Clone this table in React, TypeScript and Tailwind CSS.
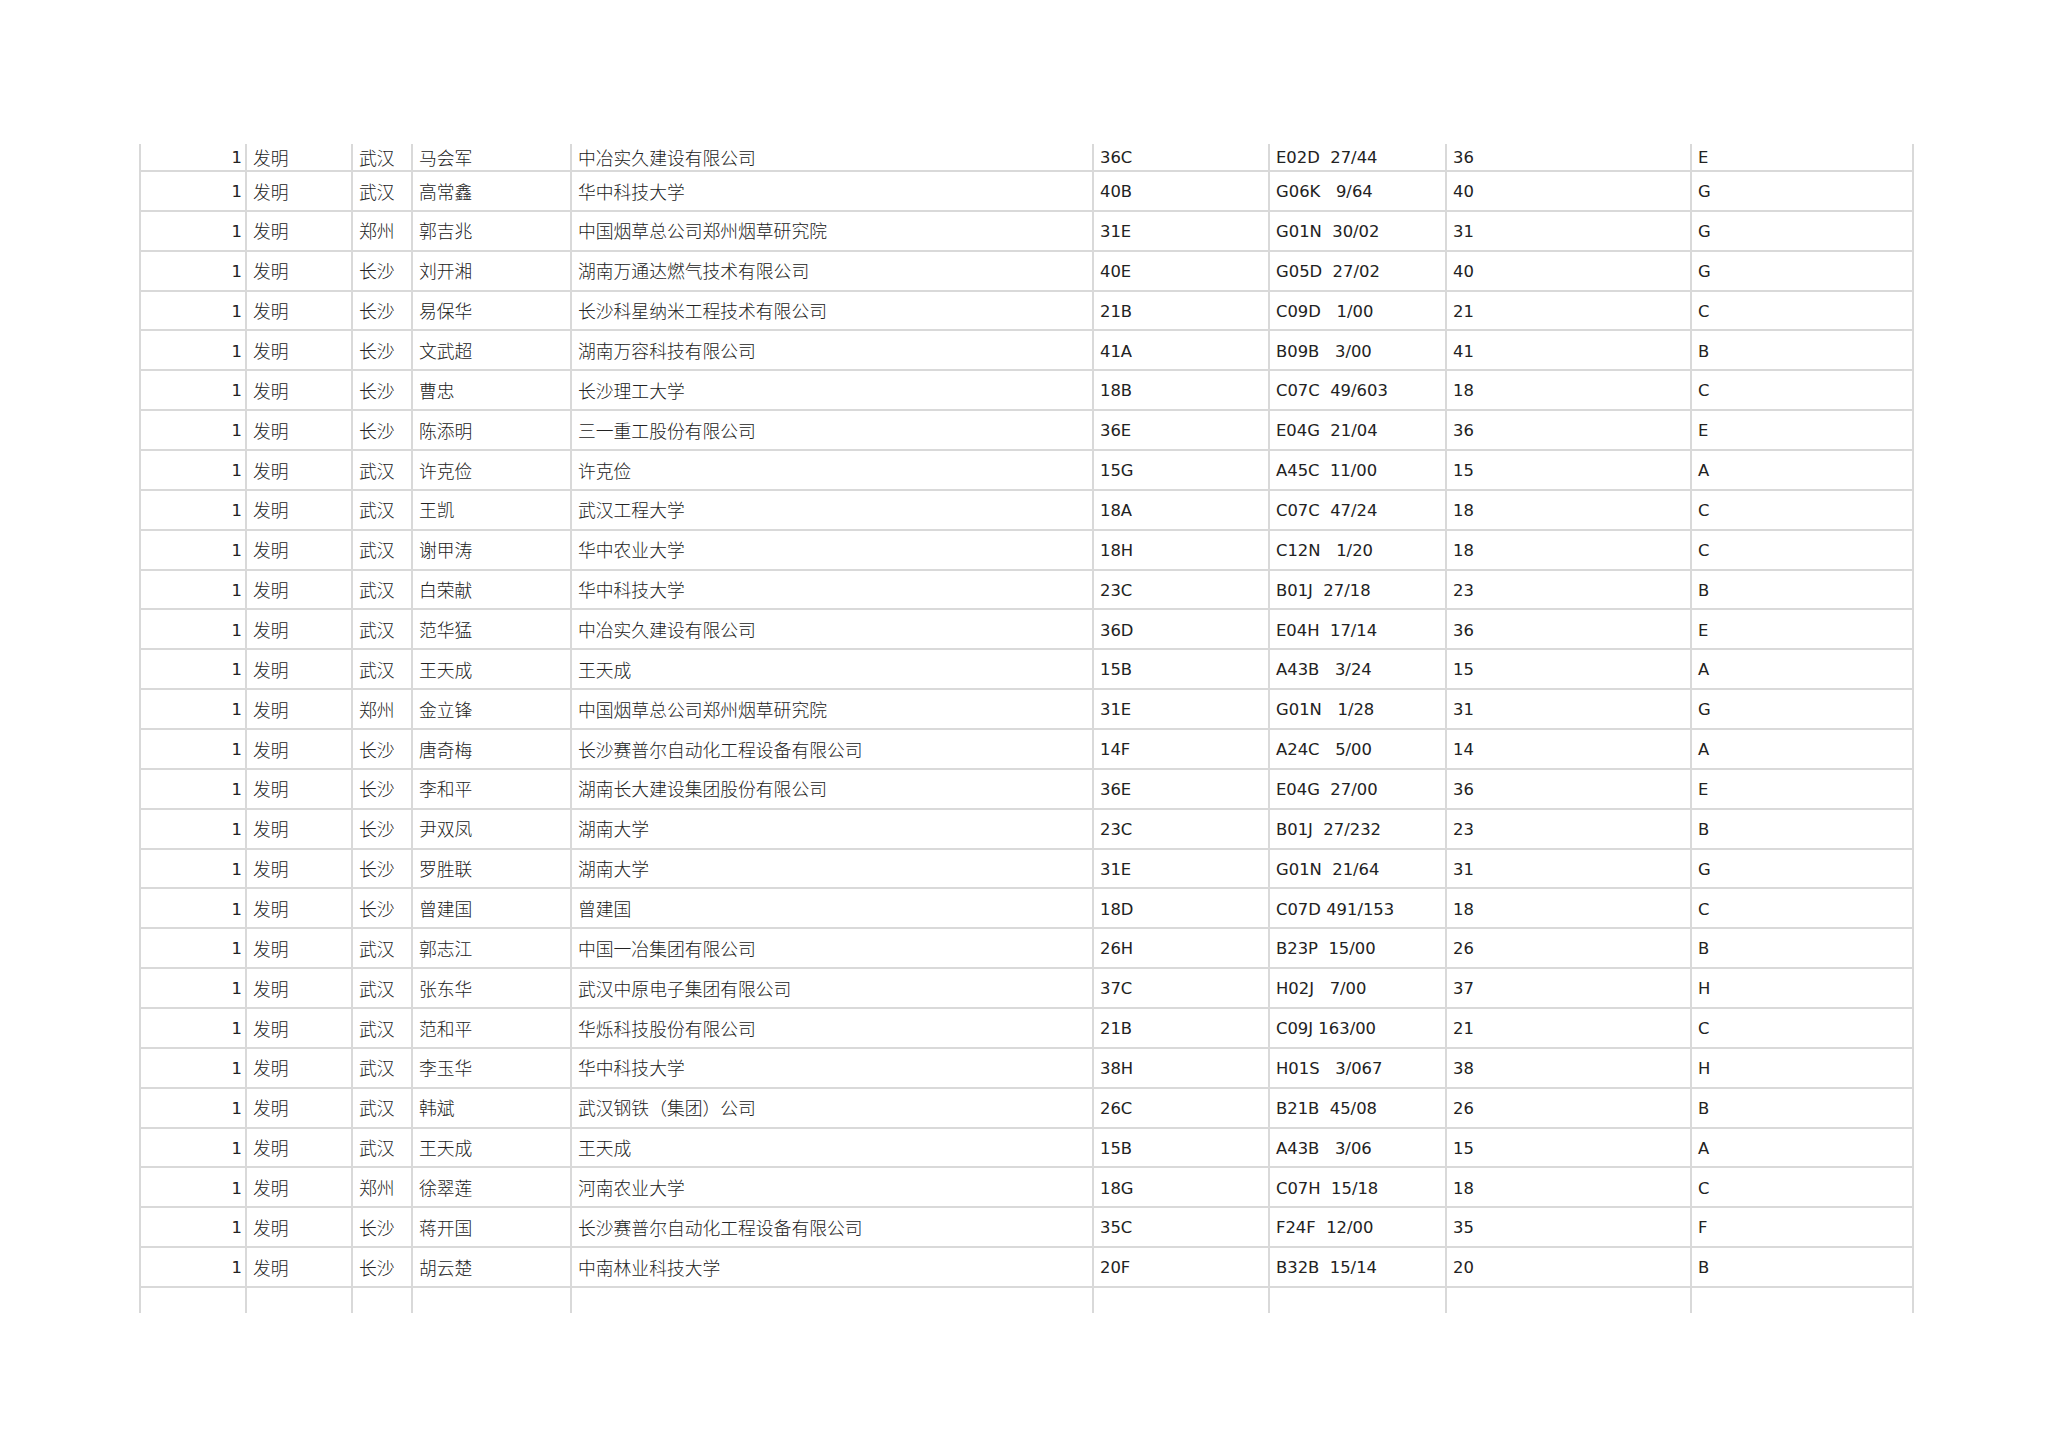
import React from "react";

type Row = [string, string, string, string, string, string, string];

// city, inventor, organisation, code, ipc, class no, section
const rows: Row[] = [
  ["武汉", "马会军", "中冶实久建设有限公司", "36C", "E02D  27/44", "36", "E"],
  ["武汉", "高常鑫", "华中科技大学", "40B", "G06K   9/64", "40", "G"],
  ["郑州", "郭吉兆", "中国烟草总公司郑州烟草研究院", "31E", "G01N  30/02", "31", "G"],
  ["长沙", "刘开湘", "湖南万通达燃气技术有限公司", "40E", "G05D  27/02", "40", "G"],
  ["长沙", "易保华", "长沙科星纳米工程技术有限公司", "21B", "C09D   1/00", "21", "C"],
  ["长沙", "文武超", "湖南万容科技有限公司", "41A", "B09B   3/00", "41", "B"],
  ["长沙", "曹忠", "长沙理工大学", "18B", "C07C  49/603", "18", "C"],
  ["长沙", "陈添明", "三一重工股份有限公司", "36E", "E04G  21/04", "36", "E"],
  ["武汉", "许克俭", "许克俭", "15G", "A45C  11/00", "15", "A"],
  ["武汉", "王凯", "武汉工程大学", "18A", "C07C  47/24", "18", "C"],
  ["武汉", "谢甲涛", "华中农业大学", "18H", "C12N   1/20", "18", "C"],
  ["武汉", "白荣献", "华中科技大学", "23C", "B01J  27/18", "23", "B"],
  ["武汉", "范华猛", "中冶实久建设有限公司", "36D", "E04H  17/14", "36", "E"],
  ["武汉", "王天成", "王天成", "15B", "A43B   3/24", "15", "A"],
  ["郑州", "金立锋", "中国烟草总公司郑州烟草研究院", "31E", "G01N   1/28", "31", "G"],
  ["长沙", "唐奇梅", "长沙赛普尔自动化工程设备有限公司", "14F", "A24C   5/00", "14", "A"],
  ["长沙", "李和平", "湖南长大建设集团股份有限公司", "36E", "E04G  27/00", "36", "E"],
  ["长沙", "尹双凤", "湖南大学", "23C", "B01J  27/232", "23", "B"],
  ["长沙", "罗胜联", "湖南大学", "31E", "G01N  21/64", "31", "G"],
  ["长沙", "曾建国", "曾建国", "18D", "C07D 491/153", "18", "C"],
  ["武汉", "郭志江", "中国一冶集团有限公司", "26H", "B23P  15/00", "26", "B"],
  ["武汉", "张东华", "武汉中原电子集团有限公司", "37C", "H02J   7/00", "37", "H"],
  ["武汉", "范和平", "华烁科技股份有限公司", "21B", "C09J 163/00", "21", "C"],
  ["武汉", "李玉华", "华中科技大学", "38H", "H01S   3/067", "38", "H"],
  ["武汉", "韩斌", "武汉钢铁（集团）公司", "26C", "B21B  45/08", "26", "B"],
  ["武汉", "王天成", "王天成", "15B", "A43B   3/06", "15", "A"],
  ["郑州", "徐翠莲", "河南农业大学", "18G", "C07H  15/18", "18", "C"],
  ["长沙", "蒋开国", "长沙赛普尔自动化工程设备有限公司", "35C", "F24F  12/00", "35", "F"],
  ["长沙", "胡云楚", "中南林业科技大学", "20F", "B32B  15/14", "20", "B"],
];

const grid =
  "grid grid-cols-[106px_106px_60px_159px_522px_176px_177px_245px_222px]";
const cell = "border-l-2 border-[#d9d9d9] flex items-center overflow-hidden whitespace-pre";
const latin = "font-['DejaVu_Sans','Verdana',sans-serif] text-[16.4px] pt-[3px]";
const cjk = "font-['Noto_Sans_CJK_SC',sans-serif] text-[17.8px] font-light";

const DataRow: React.FC<{ row: Row; first: boolean }> = ({ row, first }) => {
  const [city, name, org, code, ipc, num, sec] = row;
  return (
    <div
      className={`${grid} border-b-2 border-[#d9d9d9] ${first ? "h-[28px]" : "h-[39.86px]"}`}
    >
      <div className={`${cell} ${latin} justify-end pr-[3px]`}>1</div>
      <div className={`${cell} ${cjk} pl-[6px]`}>发明</div>
      <div className={`${cell} ${cjk} pl-[6px]`}>{city}</div>
      <div className={`${cell} ${cjk} pl-[6px]`}>{name}</div>
      <div className={`${cell} ${cjk} pl-[6px]`}>{org}</div>
      <div className={`${cell} ${latin} pl-[6px]`}>{code}</div>
      <div className={`${cell} ${latin} pl-[6px]`}>{ipc}</div>
      <div className={`${cell} ${latin} pl-[6px]`}>{num}</div>
      <div className={`${cell} ${latin} pl-[6px]`}>{sec}</div>
    </div>
  );
};

export default function App() {
  return (
    <div className="w-[2048px] h-[1447px] bg-white text-[#222] pl-[139px] pt-[144px]">
      <div className="w-[1775px] border-r-2 border-[#d9d9d9]">
        {rows.map((r, i) => (
          <DataRow key={i} row={r} first={i === 0} />
        ))}
        <div className={`${grid} h-[25px]`}>
          {Array.from({ length: 9 }).map((_, i) => (
            <div key={i} className={cell} />
          ))}
        </div>
      </div>
    </div>
  );
}
